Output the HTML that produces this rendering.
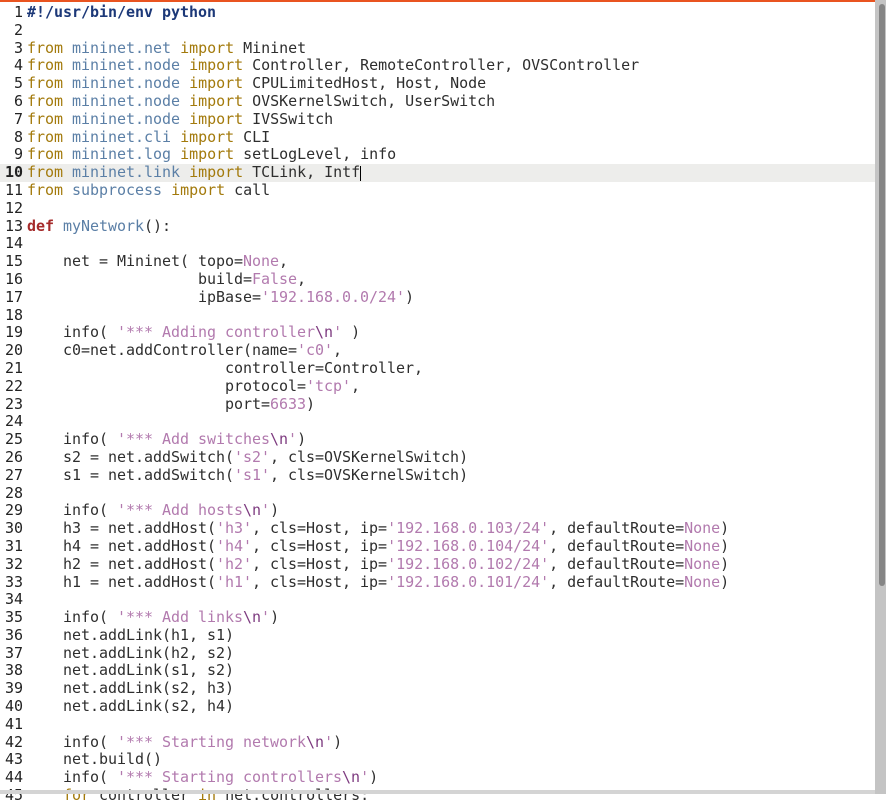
<!DOCTYPE html>
<html><head><meta charset="utf-8"><style>
html,body{margin:0;padding:0;width:886px;height:794px;overflow:hidden;background:#fff}
#top{position:absolute;left:0;top:0;width:878px;height:2px;background:#e95420}
#ed{position:absolute;left:0;top:4px;width:875px;font-family:"DejaVu Sans Mono","Liberation Mono",monospace;font-size:15px;letter-spacing:-0.03px;line-height:17.81px;color:#2e2e2e}
.l{position:relative;height:17.81px;white-space:pre;overflow:hidden}
.n{display:inline-block;width:23px;text-align:right;color:#222;margin-right:4px}
.cur{background:#ededeb}
.cur .n{font-weight:bold}
.k{color:#a37a0c}.m{color:#5b7fa6}.s{color:#b27aae}.e{color:#7d3a7f}.d{color:#a52a2a;font-weight:bold}.c{color:#1c3878;font-weight:bold}
#sb{position:absolute;left:875px;top:0;width:11px;height:794px;background:#c4c4c4}
#th{position:absolute;left:879px;top:4px;width:6px;height:582px;background:#858585;border-radius:3px}
#bot{position:absolute;left:0;top:790px;width:886px;height:4px;background:#d4d4d4}
#caret{position:absolute;left:360px;top:166px;width:1px;height:15px;background:#000}
</style></head><body>
<div id="top"></div>
<div id="ed"><div class="l"><span class="n">1</span><span class="c">#!/usr/bin/env python</span></div><div class="l"><span class="n">2</span></div><div class="l"><span class="n">3</span><span class="k">from</span> <span class="m">mininet.net</span> <span class="k">import</span> Mininet</div><div class="l"><span class="n">4</span><span class="k">from</span> <span class="m">mininet.node</span> <span class="k">import</span> Controller, RemoteController, OVSController</div><div class="l"><span class="n">5</span><span class="k">from</span> <span class="m">mininet.node</span> <span class="k">import</span> CPULimitedHost, Host, Node</div><div class="l"><span class="n">6</span><span class="k">from</span> <span class="m">mininet.node</span> <span class="k">import</span> OVSKernelSwitch, UserSwitch</div><div class="l"><span class="n">7</span><span class="k">from</span> <span class="m">mininet.node</span> <span class="k">import</span> IVSSwitch</div><div class="l"><span class="n">8</span><span class="k">from</span> <span class="m">mininet.cli</span> <span class="k">import</span> CLI</div><div class="l"><span class="n">9</span><span class="k">from</span> <span class="m">mininet.log</span> <span class="k">import</span> setLogLevel, info</div><div class="l cur"><span class="n">10</span><span class="k">from</span> <span class="m">mininet.link</span> <span class="k">import</span> TCLink, Intf</div><div class="l"><span class="n">11</span><span class="k">from</span> <span class="m">subprocess</span> <span class="k">import</span> call</div><div class="l"><span class="n">12</span></div><div class="l"><span class="n">13</span><span class="d">def</span> <span class="m">myNetwork</span>():</div><div class="l"><span class="n">14</span></div><div class="l"><span class="n">15</span>    net = Mininet( topo=<span class="s">None</span>,</div><div class="l"><span class="n">16</span>                   build=<span class="s">False</span>,</div><div class="l"><span class="n">17</span>                   ipBase=<span class="s">'192.168.0.0/24'</span>)</div><div class="l"><span class="n">18</span></div><div class="l"><span class="n">19</span>    info( <span class="s">'*** Adding controller<span class="e">\n</span>'</span> )</div><div class="l"><span class="n">20</span>    c0=net.addController(name=<span class="s">'c0'</span>,</div><div class="l"><span class="n">21</span>                      controller=Controller,</div><div class="l"><span class="n">22</span>                      protocol=<span class="s">'tcp'</span>,</div><div class="l"><span class="n">23</span>                      port=<span class="s">6633</span>)</div><div class="l"><span class="n">24</span></div><div class="l"><span class="n">25</span>    info( <span class="s">'*** Add switches<span class="e">\n</span>'</span>)</div><div class="l"><span class="n">26</span>    s2 = net.addSwitch(<span class="s">'s2'</span>, cls=OVSKernelSwitch)</div><div class="l"><span class="n">27</span>    s1 = net.addSwitch(<span class="s">'s1'</span>, cls=OVSKernelSwitch)</div><div class="l"><span class="n">28</span></div><div class="l"><span class="n">29</span>    info( <span class="s">'*** Add hosts<span class="e">\n</span>'</span>)</div><div class="l"><span class="n">30</span>    h3 = net.addHost(<span class="s">'h3'</span>, cls=Host, ip=<span class="s">'192.168.0.103/24'</span>, defaultRoute=<span class="s">None</span>)</div><div class="l"><span class="n">31</span>    h4 = net.addHost(<span class="s">'h4'</span>, cls=Host, ip=<span class="s">'192.168.0.104/24'</span>, defaultRoute=<span class="s">None</span>)</div><div class="l"><span class="n">32</span>    h2 = net.addHost(<span class="s">'h2'</span>, cls=Host, ip=<span class="s">'192.168.0.102/24'</span>, defaultRoute=<span class="s">None</span>)</div><div class="l"><span class="n">33</span>    h1 = net.addHost(<span class="s">'h1'</span>, cls=Host, ip=<span class="s">'192.168.0.101/24'</span>, defaultRoute=<span class="s">None</span>)</div><div class="l"><span class="n">34</span></div><div class="l"><span class="n">35</span>    info( <span class="s">'*** Add links<span class="e">\n</span>'</span>)</div><div class="l"><span class="n">36</span>    net.addLink(h1, s1)</div><div class="l"><span class="n">37</span>    net.addLink(h2, s2)</div><div class="l"><span class="n">38</span>    net.addLink(s1, s2)</div><div class="l"><span class="n">39</span>    net.addLink(s2, h3)</div><div class="l"><span class="n">40</span>    net.addLink(s2, h4)</div><div class="l"><span class="n">41</span></div><div class="l"><span class="n">42</span>    info( <span class="s">'*** Starting network<span class="e">\n</span>'</span>)</div><div class="l"><span class="n">43</span>    net.build()</div><div class="l"><span class="n">44</span>    info( <span class="s">'*** Starting controllers<span class="e">\n</span>'</span>)</div><div class="l"><span class="n">45</span>    <span class="k">for</span> controller <span class="k">in</span> net.controllers:</div></div>
<div id="caret"></div>
<div id="bot"></div>
<div id="sb"></div><div id="th"></div>
</body></html>
